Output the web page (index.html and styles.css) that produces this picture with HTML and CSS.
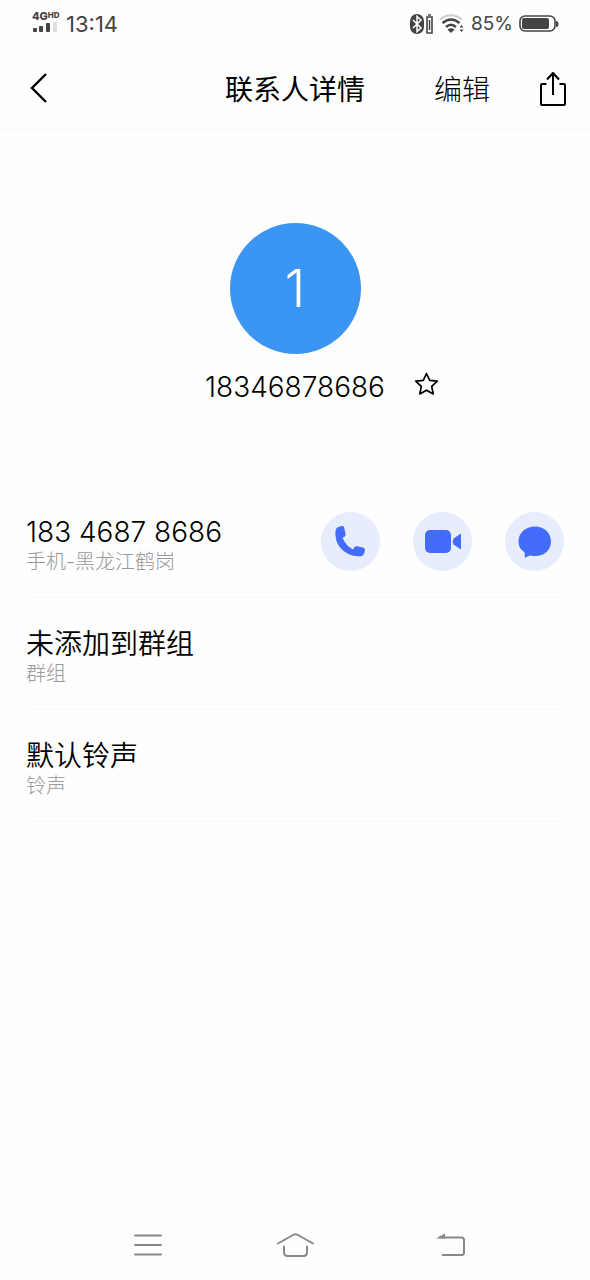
FILE: index.html
```html
<!DOCTYPE html>
<html lang="zh-CN">
<head>
<meta charset="utf-8">
<meta name="viewport" content="width=device-width, initial-scale=1">
<title>联系人详情</title>
<link rel="stylesheet" href="styles.css">
</head>
<body>
<div class="screen">
  <div class="status">
    <div class="status-left">
      <div class="signal">
        <span class="network">4G<span class="hd">HD</span></span>
        <svg width="26" height="10" viewBox="0 0 26 10" aria-hidden="true">
          <g fill="#444"><rect x="1" y="6" width="4" height="4" rx="1"/><rect x="7" y="4" width="4" height="6" rx="1"/><rect x="14" y="1" width="4" height="9" rx="1"/></g>
          <rect x="21" y="0" width="4" height="10" rx="1" fill="#ddd"/>
        </svg>
      </div>
      <span class="time">13:14</span>
    </div>
    <div class="status-right">
      <svg width="24" height="22" viewBox="0 0 24 22" aria-hidden="true">
        <rect x="1" y="1" width="14" height="20" rx="7" fill="#444"/>
        <path d="M4 7l8 8-4 3.500V3.500L12 7l-8 8" fill="none" stroke="#fff" stroke-width="1.500"/>
        <path d="M18 4h5v16h-5zM19 2h3" fill="none" stroke="#444" stroke-width="1.600"/>
        <path d="M20.500 7v10" stroke="#444" stroke-width="1.500"/>
      </svg>
      <svg width="26" height="20" viewBox="0 0 26 20" aria-hidden="true">
        <path d="M1 5.500q11-8.500 22 0" fill="none" stroke="#ccc" stroke-width="2"/>
        <path d="M3.500 9q8.500-7 17 0M7 13q5-4.500 10 0" fill="none" stroke="#444" stroke-width="2.500"/>
        <path d="M8.500 15.500q3.500-2.500 7 0L12 19zM20.500 13.500l2-2.500 2 2.500zM20.500 15.500l2 2.500 2-2.500z" fill="#444"/>
      </svg>
      <span class="percent">85%</span>
      <svg width="40" height="18" viewBox="0 0 40 18" aria-hidden="true">
        <rect x="1" y="1" width="35" height="15" rx="5" fill="#fff" stroke="#444" stroke-width="1.600"/>
        <rect x="3" y="3" width="27" height="11" rx="2" fill="#444"/>
        <path d="M37 6q2.500 0 2.500 3T37 12z" fill="#444"/>
      </svg>
    </div>
  </div>

  <header class="header">
    <div class="header-start">
      <button class="icon-button" aria-label="返回">
        <svg width="20" height="30" viewBox="0 0 20 30"><path d="M18 1L4 15l14 14" fill="none" stroke="#000" stroke-width="2.400"/></svg>
      </button>
    </div>
    <h1 class="title">联系人详情</h1>
    <div class="header-end">
      <button class="edit">编辑</button>
      <button class="icon-button" aria-label="分享">
        <svg width="26" height="36" viewBox="0 0 26 36"><g fill="none" stroke="#000" stroke-width="2" stroke-linejoin="round"><path d="M6.500 12H2q-1 0-1 1v19q0 1 1 1h22q1 0 1-1V13q0-1-1-1h-4.500"/><path d="M13 23V1M7 7.500L13 1l6 6.500"/></g></svg>
      </button>
    </div>
  </header>

  <main class="content">
    <section class="profile">
      <div class="avatar">1</div>
      <div class="name-row">
        <h2 class="name">18346878686</h2>
        <button class="icon-button star" aria-label="收藏">
          <svg width="26" height="26" viewBox="0 0 26 26"><path d="M13.500 2.500l3.200 6.900 7.600.8-5.600 5.200 1.500 7.500-6.700-3.700-6.700 3.700 1.500-7.500-5.600-5.200 7.600-.8z" fill="none" stroke="#000" stroke-width="1.700" stroke-linejoin="round"/></svg>
        </button>
      </div>
    </section>

    <ul class="details">
      <li class="row">
        <div class="info">
          <div class="value">183 4687 8686</div>
          <div class="label">手机-黑龙江鹤岗</div>
        </div>
        <div class="actions">
          <button class="action" aria-label="拨打电话">
            <svg width="59" height="59" viewBox="0 0 59 59"><path d="M14.500 18.500Q15 15.500 18 14.800L21 14Q23 13.700 23.200 15.500L24.500 22Q24.700 24 23.500 24.700L21.500 25.800Q24.500 33.500 32 37.500L33.200 35.500Q34 34 36 34.300L42 35.500Q44.200 36 44 38L43.200 41Q42.500 44 39.500 44.200Q27 45 19 35.500Q13.500 28.500 14.500 18.500z" fill="#436cfd"/></svg>
          </button>
          <button class="action" aria-label="视频通话">
            <svg width="59" height="59" viewBox="0 0 59 59"><rect x="12" y="18" width="26" height="23" rx="5" fill="#436cfd"/><path d="M40.500 26.500L48 21.500V37.500L40.500 32.500Q39 29.500 40.500 26.500z" fill="#436cfd"/></svg>
          </button>
          <button class="action" aria-label="发送短信">
            <svg width="59" height="59" viewBox="0 0 59 59"><path d="M30 14.500C39.500 14.500 46 21 46 29.500S39.500 44 30 44Q27.500 44 25 43.500L20.500 45.500Q19.700 45.700 19.700 45V40.500Q13.500 36.500 13.500 29.500C13.500 21 20.500 14.500 30 14.500z" fill="#436cfd"/></svg>
          </button>
        </div>
      </li>
      <li class="row">
        <div class="info">
          <div class="value">未添加到群组</div>
          <div class="label">群组</div>
        </div>
      </li>
      <li class="row">
        <div class="info">
          <div class="value">默认铃声</div>
          <div class="label">铃声</div>
        </div>
      </li>
    </ul>
  </main>

  <nav class="nav">
    <button class="icon-button recents" aria-label="最近任务">
      <svg width="40" height="26" viewBox="0 0 40 26"><path d="M7 3.500h26M7 13h26M7 22.500h26" stroke="#888" stroke-width="2" stroke-linecap="round"/></svg>
    </button>
    <button class="icon-button" aria-label="主屏幕">
      <svg width="40" height="26" viewBox="0 0 40 26"><path d="M3 11.500L18 3Q20.500 1.500 23 3L38 11.500M9 14.500V20Q9 24 12.500 24H28.500Q32 24 32 20V14.500" fill="none" stroke="#888" stroke-width="2" stroke-linecap="round"/></svg>
    </button>
    <button class="icon-button back" aria-label="返回上一页">
      <svg width="40" height="26" viewBox="0 0 40 26"><path d="M7 5.500H29.500Q32 5.500 32 8V20.500Q32 23 29.500 23H10" fill="none" stroke="#888" stroke-width="2"/><path d="M4 6.500L13 1.500V6.500z" fill="#888"/></svg>
    </button>
  </nav>
</div>
</body>
</html>
```
FILE: styles.css
```css
* {
  box-sizing: border-box;
}

body {
  margin: 0;
  background: #fefefe;
  color: #000;
  font-family: Inter, "Noto Sans CJK SC", sans-serif;
  font-weight: 350;
}

h1,
h2,
ul {
  margin: 0;
  padding: 0;
}

button {
  padding: 0;
  border: 0;
  background: none;
  color: inherit;
  font: inherit;
  cursor: pointer;
}

svg {
  display: block;
}

.screen {
  display: flex;
  flex-direction: column;
  min-height: 100vh;
}

.status {
  display: flex;
  justify-content: space-between;
  align-items: center;
  height: 48px;
  padding: 0 31px 0 32px;
  color: #444;
  font-weight: 400;
}

.status-left,
.status-right {
  display: flex;
  align-items: center;
}

.status-left {
  gap: 8px;
}

.status-right {
  gap: 6px;
}

.signal {
  width: 26px;
  padding-bottom: 6px;
}

.network {
  display: flex;
  font-size: 11px;
  font-weight: 800;
  line-height: 11px;
}

.hd {
  font-size: 8px;
  line-height: 8px;
}

.time {
  font-size: 22px;
  line-height: 26px;
}

.percent {
  font-size: 19px;
  line-height: 24px;
}

.header {
  display: grid;
  grid-template-columns: 1fr auto 1fr;
  align-items: center;
  height: 82px;
  padding: 2px 24px 0;
  border-bottom: 1px solid #f7f7f7;
}

.header-start {
  padding-left: 4px;
}

.title {
  font-size: 28px;
  font-weight: 400;
  line-height: 40px;
}

.header-end {
  display: flex;
  justify-content: flex-end;
  align-items: center;
  gap: 50px;
}

.edit {
  font-size: 28px;
  font-weight: 300;
  line-height: 40px;
}

.content {
  flex: 1;
}

.profile {
  display: flex;
  flex-direction: column;
  align-items: center;
  gap: 13px;
  padding: 93px 0 79px;
}

.avatar {
  display: grid;
  place-items: center;
  width: 131px;
  height: 131px;
  border-radius: 50%;
  background: #3b95f2;
  color: #fff;
  font-size: 52px;
}

.name-row {
  display: grid;
  grid-template-columns: 1fr auto 1fr;
  align-items: center;
  gap: 28px;
  width: 100%;
}

.name {
  grid-column: 2;
  font-size: 28px;
  font-weight: 300;
  line-height: 40px;
}

.star {
  justify-self: start;
  padding-bottom: 6px;
}

.details {
  padding: 0 26px;
  list-style: none;
}

.row {
  display: flex;
  justify-content: space-between;
  align-items: center;
  height: 112px;
  border-bottom: 1px solid #f7f7f7;
}

.info {
  padding-top: 6px;
}

.value {
  font-size: 28px;
  line-height: 34px;
}

.label {
  color: #999;
  font-size: 20px;
  font-weight: 300;
  line-height: 26px;
}

.actions {
  display: flex;
  gap: 33px;
}

.action {
  border-radius: 50%;
  background: #e7edfd;
}

.nav {
  display: grid;
  grid-template-columns: 1fr auto 1fr;
  padding: 0 118px 22px;
}

.recents {
  justify-self: start;
  padding-left: 10px;
}

.back {
  justify-self: end;
}
```
